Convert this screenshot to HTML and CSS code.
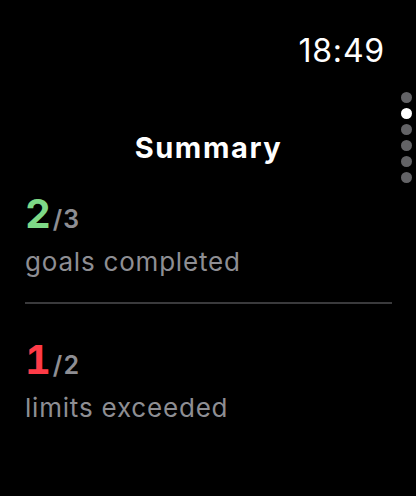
FILE: index.html
```html
<!DOCTYPE html>
<html lang="en">
<head>
    <meta charset="UTF-8">
    <title>Summary</title>
    <link rel="stylesheet" href="styles.css">
</head>
<body>
<div class="screen">
    <div class="status-bar">
        <span class="time">18:49</span>
    </div>

    <div class="page-dots">
        <span class="dot"></span>
        <span class="dot active"></span>
        <span class="dot"></span>
        <span class="dot"></span>
        <span class="dot"></span>
        <span class="dot"></span>
    </div>

    <h1 class="title">Summary</h1>

    <div class="stat first">
        <p class="count"><span class="value goals">2</span><span class="total">/3</span></p>
        <p class="label">goals completed</p>
    </div>

    <hr class="divider">

    <div class="stat second">
        <p class="count"><span class="value limits">1</span><span class="total">/2</span></p>
        <p class="label">limits exceeded</p>
    </div>
</div>
</body>
</html>
```

FILE: styles.css
```css
body {
    margin: 0;
    background-color: #000;
    font-family: Inter, "Noto Sans", sans-serif;
    color: white;
}

.screen {
    position: relative;
    width: 416px;
    height: 496px;
    overflow: hidden;
    box-sizing: border-box;
    padding: 0 24px 0 25px;
}

.status-bar {
    display: flex;
    justify-content: flex-end;
    padding-top: 32px;
    padding-right: 7px;
}

.time {
    font-size: 32px;
    line-height: 38px;
    font-weight: 400;
    letter-spacing: 0.8px;
}

.page-dots {
    position: absolute;
    top: 92px;
    right: 4px;
    display: flex;
    flex-direction: column;
    gap: 5px;
}

.dot {
    width: 11px;
    height: 11px;
    border-radius: 50%;
    background-color: #636366;
}

.dot.active {
    background-color: #fff;
}

.title {
    margin: 61px 0 0;
    text-align: center;
    font-size: 29px;
    line-height: 34px;
    font-weight: 700;
    letter-spacing: 1.6px;
}

.stat.first {
    margin-top: 29px;
}

.stat.second {
    margin-top: 36px;
}

.count {
    margin: 0;
    line-height: 40px;
    font-variant-numeric: tabular-nums;
}

.value {
    font-size: 40px;
    font-weight: 700;
}

.value.goals {
    color: #7ed987;
}

.value.limits {
    color: #ff3b47;
}

.total {
    margin-left: 2px;
    font-size: 25px;
    font-weight: 600;
    color: #8e8e93;
    letter-spacing: 1px;
}

.label {
    margin: 5px 0 0;
    font-size: 26px;
    line-height: 30px;
    color: #8e8e93;
    letter-spacing: 0.8px;
}

.divider {
    margin: 25px 0 0;
    border: none;
    height: 2px;
    background-color: #3a3a3c;
}
```
